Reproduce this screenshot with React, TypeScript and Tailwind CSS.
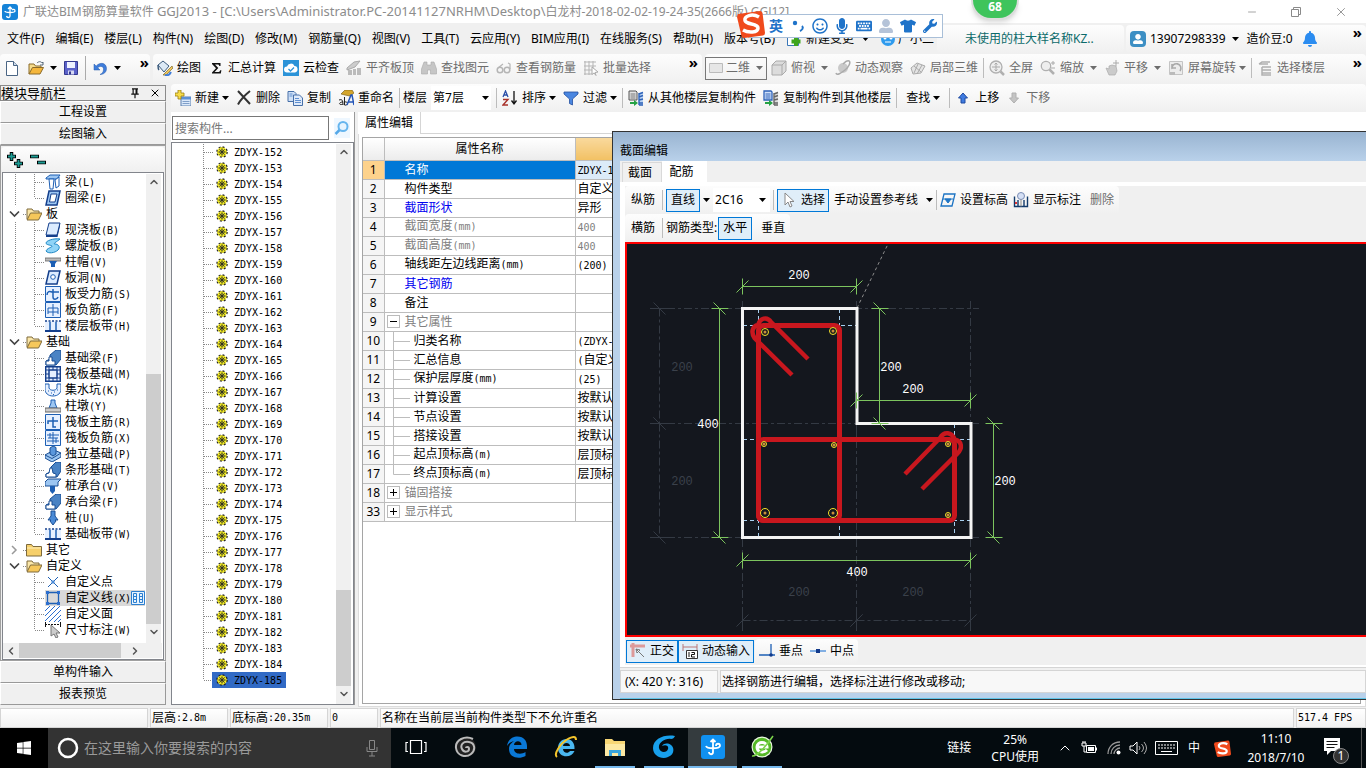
import { Fragment, type ReactNode } from "react";
import clsx from "clsx";
import { ChevronUp, ChevronDown, ChevronLeft, ChevronRight, Minus, X } from "lucide-react";
import { FaMicrophone, FaKeyboard, FaTshirt, FaWrench, FaRegSmile, FaUserAlt, FaBell, FaWindows } from "react-icons/fa";

/* ---------- 16x16 drawings ---------- */

const B = "#1d5fb4";
const L = "#9cc6f2";

const art: Record<string, ReactNode> = {
  newDoc: <><path d="M2.500 1.500h7l4 4v10h-11z" fill="#fff" stroke="#4a6584" /><path d="M9.500 1.500v4h4" fill="#cfdcec" stroke="#4a6584" /></>,
  open: <><path d="M1 14V4h5l1.500 2H13v3" fill="#f6dc8c" stroke="#8a6a2a" /><path d="M1 14l3.500-6.500h11L12 14z" fill="#f4b63c" stroke="#8a6a2a" /><path d="M9 3c2-2 4-1.500 5 0l1-1v3h-3" fill="none" stroke="#567" /></>,
  save: <><path d="M1.500 1.500h13v13h-13z" fill="#5b62c9" stroke="#34398f" /><path d="M4 2h8v6H4z" fill="#eef2ff" /><path d="M5 10.500h6v4H5z" fill="#d6d9f3" /><path d="M6 11.500h2v3H6z" fill="#34398f" /></>,
  undo: <path d="M2 4v6h6L5.800 7.800C8 5.500 12 6 11.500 10c-.2 2-1.500 3.500-3.500 4.500 4 0 6.500-2.500 6.500-6C14.500 3 8 1.500 4.200 6.100z" fill="#3f7ddb" stroke="#2a5cab" strokeWidth=".5" />,
  paint: <><path d="M1 5l5-4 6 5-5 6z" fill="#dce9f5" stroke="#3c5b7c" /><path d="M1 5c0 3 0 4 1 5" stroke="#3c5b7c" fill="none" strokeWidth="1.500" /><path d="M15 6L8 13l-2 2 3 0 7-7z" fill="#f0c75e" stroke="#7c6a2a" strokeWidth=".7" /><path d="M8 15c3 1 5-1 6-3" stroke="#3f7ddb" strokeWidth="2" fill="none" /></>,
  sigma: <path d="M4 3h8.500v3h-1.200c-.2-1.200-.8-1.600-2-1.600H7l3.300 3.700L6.600 12h3.200c1.500 0 2-.5 2.400-1.800h1.200L12.800 13.500H4v-1l4-4.200L4 4z" fill="#111" />,
  cloud: <><path d="M0 0h16v16H0z" fill="#2b93d8" /><path d="M4 12.500a3 3 0 010-6 4 4 0 017.500-.5 3.300 3.300 0 01.5 6.500z" fill="#fff" /><path d="M5.500 9l2 2 3.500-3.500" stroke="#2b93d8" fill="none" strokeWidth="1.300" /></>,
  align: <><path d="M1 8l7-6 6-1-5 6-8 3z" fill="#ccc" stroke="#aaa" /><path d="M2 10h4v5H2zM7 9h3v6H7zM11 8h4v7h-4z" fill="#bbb" /></>,
  binoc: <path d="M3 2h3v3h4V2h3l2.500 7v5h-6v-4h-3v4h-6V9z" fill="#c6c6c6" stroke="#aaa" strokeWidth=".6" />,
  glasses: <><circle cx="4" cy="10" r="2.800" fill="none" stroke="#b5b5b5" strokeWidth="1.500" /><circle cx="11" cy="10" r="2.800" fill="none" stroke="#b5b5b5" strokeWidth="1.500" /><path d="M2 8l5-4M14 9V4l-2-1" stroke="#b5b5b5" fill="none" strokeWidth="1.200" /></>,
  batch: <><path d="M1 2h12M1 6h12M1 10h8M1 14h8M2 1v14M6 1v14M10 1v8" stroke="#b5b5b5" fill="none" /><path d="M9 7l6 5-3 .5 1 3-2-2.500-2 1.500z" fill="#fff" stroke="#aaa" /></>,
  flat: <path d="M1.500 3.500h13v9h-13z" fill="#e6e6e6" stroke="#bbb" />,
  cube: <><path d="M1 5l4-4h10v10l-4 4H1z" fill="#dcdcdc" stroke="#aaa" /><path d="M1 5h10v10M11 5l4-4" fill="none" stroke="#aaa" /></>,
  orbit: <><ellipse cx="8" cy="8" rx="5" ry="5" fill="#c9c9c9" /><path d="M1 13c1 3 5 0 9-3s6-8 4-9-4 1-6 3" fill="none" stroke="#aaa" strokeWidth="1.500" /></>,
  part3d: <><path d="M1 8l6-5 8 3-4 7-8 1z" fill="#e4e4e4" stroke="#aaa" /><path d="M4 6l7 6M8 4l-4 9M12 5l-5 9" stroke="#aaa" fill="none" /></>,
  full: <><circle cx="7" cy="7" r="6" fill="#eee" stroke="#b0b0b0" strokeWidth="1.300" /><path d="M7 3v8M3 7h8M5.500 4.500L7 3l1.500 1.500M5.500 9.500L7 11l1.500-1.500" stroke="#aaa" fill="none" /><path d="M11.500 11.500L15 15" stroke="#b0b0b0" strokeWidth="2.500" /></>,
  zoom: <><circle cx="6" cy="6" r="4.700" fill="#eee" stroke="#b0b0b0" strokeWidth="1.300" /><path d="M9.500 9.500L14 14" stroke="#b0b0b0" strokeWidth="2.500" /><path d="M11 3h4M13 1v4M11 8h4" stroke="#aaa" /></>,
  pan: <><path d="M2 8l3 1V6l3-1 4 1 1 5-2 4H5z" fill="#cbcbcb" stroke="#aaa" strokeWidth=".7" /><path d="M12 0v6M9 3h6" stroke="#aaa" /></>,
  rotate: <><path d="M1.500 1.500h13v13h-13z" fill="#ececec" stroke="#c4c4c4" /><path d="M4 9a4.500 4.500 0 118 2M4 4v4h4" fill="none" stroke="#aaa" strokeWidth="1.600" /><path d="M2 12h5v3H2z" fill="#bbb" /></>,
  floors: <path d="M2 4l3-2h8M2 4h9M5 7h9M5 10h9M5 13h9M5 7v8h9" fill="none" stroke="#b0b0b0" strokeWidth="1.500" />,
  create: <><path d="M6 7h10v9H6z" fill="#dbe9fa" stroke="#5b7fae" /><path d="M6 7h10v2.500H6z" fill="#5b8fd6" /><path d="M7.500 11.500h7M7.500 13.500h7" stroke="#7f9fc9" /><path d="M3 0h3v3h3v3H6v3H3V6H0V3h3z" fill="#f7dc4a" stroke="#9a7d10" strokeWidth=".8" /></>,
  remove: <path d="M2 1l12 13M14 1C9 5 5 9 2 14.500" stroke="#333" strokeWidth="2" fill="none" />,
  copy: <><path d="M1 1.500h6l2 2v8H1z" fill="#cfe0f6" stroke="#466fa8" /><path d="M6.500 5h6l3 3v7.500h-9z" fill="#dfeafa" stroke="#466fa8" /><path d="M8 8.500h4M8 10.500h6M8 12.500h6M2.500 4h3M2.500 6h3" stroke="#5f8fd0" /></>,
  rename: <><path d="M3 4l4-4h7l2 3-4 3-5-1z" fill="#d4a62d" stroke="#6f5510" strokeWidth=".6" /><path d="M1 10c3-1 4 0 4 5M5 12c-5 0-4 4 0 2M6.500 7v8c4 1 4-4 0-3" stroke="#222" fill="none" /><path d="M9 15l4-10h1l2 10M10.500 12H15" stroke="#2456b8" fill="none" strokeWidth="1.500" /></>,
  sort: <><path d="M1 7l2.500-6L6 7M2 5h3" stroke="#2b4fa8" fill="none" strokeWidth="1.300" /><path d="M1 9.500h5L1 15h5" stroke="#a8322b" fill="none" strokeWidth="1.400" /><path d="M12 1v12M9.500 10.500L12 14l2.500-3.500" stroke="#111" fill="none" strokeWidth="1.300" /></>,
  filter: <path d="M1 2h14v2L9.500 9v6l-3-1.500V9L1 4z" fill="#4a86e0" stroke="#234fa0" strokeWidth=".8" />,
  fromFloor: <><path d="M1 1h7l1 1v8H1z" fill="#e3e3e3" stroke="#555" /><path d="M2.500 4h5M2.500 6h5M2.500 8h5" stroke="#777" /><path d="M11 3l4-1.500v13.500h-4z" fill="#b8d2f2" /><path d="M11 4l4-1.500M11 7l4-1.500M11 10l4-1M11 13h4M11 15h4M11 3v12" stroke="#2e62b8" fill="none" strokeWidth="1.400" /><path d="M2 12h4v-2l4 3-4 3v-2H2z" fill="#25a244" /></>,
  toFloor: <><path d="M1 1h7l1 1v8H1z" fill="#cfe0fa" stroke="#2e62b8" strokeWidth="1.300" /><path d="M2.500 4h5M2.500 6h5M2.500 8h5" stroke="#2e62b8" /><path d="M11 3l4-1.500v13.500h-4z" fill="#ddd" /><path d="M11 4l4-1.500M11 7l4-1.500M11 10l4-1M11 13h4M11 15h4M11 3v12" stroke="#666" fill="none" strokeWidth="1.400" /><path d="M2 12h4v-2l4 3-4 3v-2H2z" fill="#25a244" /></>,
  up: <path d="M8 3l4.500 5H10v5H6V8H3.500z" fill="#3f7be0" stroke="#1f4aa0" />,
  down: <path d="M8 13l4.500-5H10V3H6v5H3.500z" fill="#c4c4c4" stroke="#b0b0b0" />,
  cursor: <path d="M4 1v12l3-3 2 5 2-1-2-4.500h4z" fill="#fff" stroke="#888" />,
  level: <><path d="M4 2h11l-3 12H1z" fill="none" stroke="#1d74c4" strokeWidth="1.300" /><path d="M3 7h10M5 7l3 4 3-4z" fill="#1d74c4" stroke="#1d74c4" /></>,
  showDim: <><path d="M1.500 4.500v10h13v-10M5 8v6M11 8v6" fill="none" stroke="#123a6b" strokeWidth="1.400" /><circle cx="8" cy="4" r="3.500" fill="#d5e0f5" stroke="#7a8db5" /><path d="M2 10h2v2H2z" fill="#d33" /><path d="M8 7.500v7" stroke="#888" /></>,
  ortho: <><path d="M3 0v14M0 3h15" stroke="#dd9a9a" strokeWidth="3" /><path d="M6 6l8 8M6 6l1 4 3-3z" stroke="#777" fill="#fff" /></>,
  dyn: <><path d="M1 1v7M15 1v7M1 4h14" stroke="#b77" /><path d="M4.500 7.500h11v8h-11z" fill="#fff" stroke="#333" /><path d="M7 9v5M9.500 9.500h3v2h-3v2.500h3.500" stroke="#111" fill="none" /></>,
  perp: <><path d="M0 12h16M12 1v12" stroke={B} fill="none" strokeWidth="1.300" /><circle cx="12" cy="12" r="1.800" fill="#123a8b" /></>,
  mid: <><path d="M0 8h16" stroke="#5b97dc" strokeWidth="1.500" /><path d="M6 6h4v4H6z" fill="#123a8b" /></>,
  search: <><circle cx="9" cy="6.500" r="4.500" fill="#e6f4ff" stroke="#66b5ee" strokeWidth="2" /><path d="M5.500 10L1.500 14" stroke="#55a8e8" strokeWidth="2.500" /></>,
  pin: <path d="M4 2.500h8M5.500 2v7M9.500 2v7M10.500 2v7M3 9.500h10M8 10v5" stroke="#111" strokeWidth="1.600" fill="none" />,

  // navigation tree
  folderOpen: <><path d="M1 13V3h5l1.500 2H13v3" fill="#fbe7a9" stroke="#7e6a3c" /><path d="M1 14l3.500-7h11.500L12.500 14z" fill="#f6c75a" stroke="#7e6a3c" /></>,
  folder: <><path d="M.5 14V2.500h5L7 4.500h8.500V14z" fill="#f6cf6a" stroke="#7e6a3c" /><path d="M1 6h14" stroke="#fff0bd" /></>,
  beam: <><path d="M1 4l4-3h10l-3 4H1z" fill={L} stroke={B} /><path d="M4 5h5l-1 10H5zM10 6l4-3v9l-3 2z" fill="#fff" stroke={B} /></>,
  ring: <><path d="M4 1h11l-3 14H1z" fill={L} stroke="#143f8c" strokeWidth="1.500" /><path d="M6 4h6l-2 8H4.500z" fill="#fff" stroke="#143f8c" /></>,
  slab: <><path d="M4 1h11l-3 12H1z" fill="#dcecff" stroke="#143f8c" /><path d="M1 13h11l3-12v3l-2.500 11H1z" fill="#143f8c" /></>,
  spiral: <path d="M15 1C8 0 1 3 1 5s5 2 6 3-5 2-6 5c2 3 9 2 12-1s0-6-3-6 3-3 5-5z" fill="#8fd4f7" stroke="#1d86c4" />,
  cap: <><path d="M0 4h16v3H0z" fill="#bbb" stroke="#666" strokeWidth=".8" /><path d="M4 7h8l-2 3v3H6v-3z" fill={B} /></>,
  hole: <><path d="M4 1h11l-3 13H1z" fill="#dcecff" stroke="#143f8c" strokeWidth="1.500" /><circle cx="8" cy="7" r="2.300" fill="#fff" stroke={B} /></>,
  rebarS: <><path d="M.5.500h15v15H.5z" fill="#e6f0ff" stroke={B} /><path d="M2 9c0-4 3-4 5-3h7M8 3v8c0 3 4 3 5 0" fill="none" stroke={B} strokeWidth="1.500" /></>,
  rebarF: <><path d="M.5.500h15v15H.5z" fill="#e6f0ff" stroke={B} /><path d="M3 12V6h10v6M3 10h10M8 2v12" fill="none" stroke={B} /></>,
  strip: <><path d="M0 3h16v10H0z" fill="#e6f0ff" /><path d="M0 3h16" stroke="#143f8c" strokeWidth="1.500" strokeDasharray="2 1.500" /><path d="M0 13h16" stroke="#143f8c" strokeWidth="2" /><path d="M5 4v8M11 4v8" stroke={B} strokeWidth="1.500" /></>,
  fbeam: <><path d="M1 15v-4l4-2V5l6-5h5v9l-5 6z" fill="#4a83c4" stroke="#1b4f94" /><path d="M1 15v-4h3V7h3v4h3v4z" fill="#fff" stroke="#1b4f94" /></>,
  raft: <><path d="M.7.700h14.600v14.600H.7z" fill="#e6f0ff" stroke="#143f8c" strokeWidth="1.400" /><path d="M4 1v14M12 1v14M1 4h14M1 12h14M4 4h8v8H4zM8 1v3M8 12v3M1 8h3M12 8h3" fill="none" stroke="#143f8c" /></>,
  pit: <><path d="M0 2h4v4c1 3 7 3 8 0V2h4v5c0 4-3 7-8 7s-8-3-8-7z" fill="#e6f0ff" stroke={B} /><path d="M3 9h1M6 11h1M9 10h1M12 8h1M8 12.500h1" stroke={B} /></>,
  pier: <><path d="M4 10l2-5V2h4v3l2 5z" fill={L} stroke={B} /><path d="M0 10h16v4H0z" fill="#ccc" stroke="#666" /></>,
  rebarR: <><path d="M.5.500h15v15H.5z" fill="#e6f0ff" stroke={B} /><path d="M3 10V7h10M8 3v10h3" fill="none" stroke={B} strokeWidth="1.500" /></>,
  rebarX: <><path d="M.5.500h15v15H.5z" fill="#e6f0ff" stroke={B} /><path d="M2 5h12M2 11h12M5 3v5M11 8v5M3 8h10M8 2v12" fill="none" stroke={B} /></>,
  pad: <><path d="M0 9l9-5 7 3v4l-9 5-7-4z" fill={L} stroke="#1b4f94" /><path d="M5 2l3-2 3 1.500V8L8 10 5 8z" fill="#5b97dc" stroke="#1b4f94" /><path d="M0 9l7 3.500L16 7" fill="none" stroke="#1b4f94" /></>,
  stripF: <><path d="M1 15v-3l4-2 1-5 5-5h5v9l-4 6z" fill="#4a83c4" stroke="#1b4f94" /><path d="M1 15v-3l3-1 1-5h2l1 5 3 1v3z" fill="#fff" stroke="#1b4f94" /></>,
  pileCap: <><path d="M0 4l3-3h13l-3 3v4H0z" fill={L} stroke="#1b4f94" /><path d="M5 8h5v5l-2.500 3L5 13z" fill={B} /></>,
  pile: <path d="M6 1h4v5l3 4h-3l1 1-3 4-3-4 1-1H3l3-4z" fill="#4a8ad6" stroke="#1b4f94" />,
  point: <><path d="M3 3l10 10M13 3L3 13" stroke={B} /><path d="M6.500 6.500h3v3h-3z" fill="#4a8ad6" /></>,
  poly: <><path d="M2.500 2.500h11v11h-11z" fill="none" stroke={B} strokeWidth="1.300" /><path d="M1 1h3v3H1zM12 1h3v3h-3zM1 12h3v3H1zM12 12h3v3h-3z" fill="#2c6fd0" /></>,
  hatch: <path d="M0 5l5-5M0 10L10 0M0 15L15 0M4 16L16 4M9 16l7-7M13 16l3-3" stroke="#2c6fd0" />,
  dim: <><path d="M.5 0v5M15.500 0v5M0 2.500h16" stroke="#111" strokeDasharray="2 1" /><path d="M6 3v11l3-2 2 4 2-1-2-4h4z" fill="#ccc" stroke="#777" /></>,
  gear: <><circle cx="6" cy="8" r="4.500" fill="#f6ee20" stroke="#f6ee20" /><circle cx="6" cy="8" r="5.200" fill="none" stroke="#222" strokeWidth="1.200" strokeDasharray="2 2.080" /><path d="M6 3.500v9M1.500 8h9M3 5l6 6M9 5l-6 6" stroke="#333" strokeWidth=".6" /><circle cx="6" cy="8" r="2.200" fill="none" stroke="#222" strokeWidth=".7" /><circle cx="6" cy="8" r="1" fill="#222" /></>,
};

function Icon({ name, className = "w-4 h-4" }: { name: string; className?: string }) {
  return <svg viewBox="0 0 16 16" className={clsx("shrink-0", className)} aria-hidden="true">{art[name]}</svg>;
}

function Arrow({ className }: { className?: string }) {
  return (
    <svg viewBox="0 0 7 4" className={clsx("w-[7px] h-1 shrink-0", className)} aria-hidden="true">
      <path d="M0 0h7L3.500 4z" fill="currentColor" />
    </svg>
  );
}

/* Narrow fixed-width glyphs next to 12px Han characters */
function Mixed({ text }: { text: string }) {
  return (
    <>
      {text.split(/([\x20-\x7e]+)/).map((part, i) =>
        i % 2 ? <span key={i} className="font-['DejaVu_Sans_Mono',monospace] text-[10px]">{part}</span> : <Fragment key={i}>{part}</Fragment>
      )}
    </>
  );
}

const Sep = () => <span className="-mx-0.5 h-5 w-px shrink-0 bg-[#bcbcbc]" />;
const More = () => <button aria-label="more" className="pb-3 text-[15px] leading-none font-bold">»</button>;

type ToolProps = { icon?: string; label: string; off?: boolean; arrow?: "near" | "far"; on?: boolean };

function Tool({ icon, label, off, arrow, on }: ToolProps) {
  return (
    <button
      disabled={off}
      className={clsx(
        "flex h-[23px] shrink-0 items-center gap-1 whitespace-nowrap",
        off && "text-[#6d6d6d]",
        on && "border border-[#0078d7] bg-[#e0eef9]",
        on && (icon ? "px-[3px]" : "px-1"),
        !icon && !on && "px-1"
      )}
    >
      {icon && <Icon name={icon} />}
      {label}
      {arrow && <Arrow className={arrow === "far" ? "ml-0.5" : "-ml-px"} />}
    </button>
  );
}

const bar = "flex items-center rounded-sm bg-linear-to-b from-[#fdfdfd] to-[#f0f0f0]";

function TitleBar() {
  return (
    <header className="flex h-[23px] shrink-0 items-center bg-white pl-0.5">
      <svg viewBox="0 0 16 16" className="h-4 w-4">
        <rect width="16" height="16" rx="3" fill="#1583d8" />
        <path d="M8 3v9c0 2-3 2-3.500 0M3 7c0 2 10 2 10 0s-2-2-3-1M6 5l2-2 2 2" fill="none" stroke="#fff" strokeWidth="1.300" />
      </svg>
      <h1 className="ml-[5px] flex-1 truncate text-xs text-[#8c8c8c]">
        广联达BIM钢筋算量软件 <span className="text-[13px]">GGJ2013 - [C:\Users\Administrator.PC-20141127NRHM\Desktop\</span>白龙村-2018-02-02-19-24-35(2666版).GGJ12]
      </h1>
      <div className="flex w-[120px] items-center justify-between pr-[18px] text-[#8a8a8a]">
        <button aria-label="minimize"><Minus className="h-3 w-3" strokeWidth={1.500} /></button>
        <button aria-label="restore">
          <svg viewBox="0 0 10 10" className="h-[10px] w-[10px]"><path d="M.5 2.500h7v7h-7zM2.500 2.500v-2h7v7h-2" fill="none" stroke="currentColor" /></svg>
        </button>
        <button aria-label="close"><X className="h-[14px] w-[14px]" strokeWidth={1.500} /></button>
      </div>
    </header>
  );
}

const menus = ["文件(F)", "编辑(E)", "楼层(L)", "构件(N)", "绘图(D)", "修改(M)", "钢筋量(Q)", "视图(V)", "工具(T)", "云应用(Y)", "BIM应用(I)", "在线服务(S)", "帮助(H)", "版本号(B)"];

function MenuBar() {
  return (
    <div className="flex h-[31px] shrink-0 items-center">
      <nav className="flex w-[937px] shrink-0 items-center gap-[11px] overflow-hidden pl-[7px] whitespace-nowrap">
        {menus.map((m) => <button key={m}>{m}</button>)}
        <button className="flex items-center gap-1">
          <svg viewBox="0 0 16 16" className="h-4 w-4"><path d="M1.500 1.500h9l2 2v11h-11z" fill="#fff" stroke="#3a77b8" /><path d="M10 6v9M5.500 10.500h9" stroke="#3fa51c" strokeWidth="4" /></svg>
          新建变更
          <Arrow className="ml-1" />
        </button>
        <button className="flex items-center gap-0.5">
          <svg viewBox="0 0 16 16" className="h-4 w-4"><circle cx="8" cy="8" r="7" fill="#2f9bee" /><circle cx="5" cy="7" r="1.500" fill="#fff" /><circle cx="11" cy="7" r="1.500" fill="#fff" /><path d="M5 11h6" stroke="#fff" /></svg>
          广小二
        </button>
      </nav>
      <div className={clsx(bar, "h-7 flex-1 overflow-hidden pl-7")}>
        <a href="#notice" className="whitespace-nowrap text-[#0b6a6a]">未使用的柱大样名称KZ..</a>
      </div>
      <div className={clsx(bar, "ml-0.5 h-7 w-[240px] shrink-0 pr-1 pl-1")}>
        <span className="mr-1 flex h-4 w-4 items-center justify-center rounded-sm bg-[#3d8fc4] text-white"><FaUserAlt className="h-2.5 w-2.5" /></span>
        13907298339
        <Arrow className="mr-2 ml-1.5" />
        造价豆:0
        <FaBell className="ml-2.5 h-4 w-[14px] text-[#2b8cf0]" />
        <span className="flex-1" />
        <More />
      </div>
    </div>
  );
}

function MainToolbar() {
  return (
    <div className="flex h-[30px] shrink-0 gap-[3px]">
      <div className={clsx(bar, "w-[150px] shrink-0 pr-px pb-0.5 pl-1")}>
        <button aria-label="new"><Icon name="newDoc" /></button>
        <button aria-label="open" className="ml-2 flex items-center gap-1.5"><Icon name="open" /><Arrow /></button>
        <button aria-label="save" className="mr-1.5 ml-1.5"><Icon name="save" /></button>
        <span className="h-6 w-px bg-[#aaa]" />
        <button aria-label="undo" className="ml-1.5 flex items-center gap-1.5"><Icon name="undo" /><Arrow /></button>
        <span className="flex-1" />
        <More />
      </div>
      <div className={clsx(bar, "w-[549px] shrink-0 gap-[7px] pr-1 pb-0.5 pl-1")}>
        <Tool icon="paint" label="绘图" />
        <Tool icon="sigma" label="汇总计算" />
        <Tool icon="cloud" label="云检查" />
        <Tool icon="align" label="平齐板顶" off />
        <Tool icon="binoc" label="查找图元" off />
        <Tool icon="glasses" label="查看钢筋量" off />
        <Tool icon="batch" label="批量选择" off />
        <span className="flex-1" />
        <More />
      </div>
      <div className={clsx(bar, "flex-1 gap-[7px] overflow-hidden pr-1 pb-0.5")}>
        <label className="relative -mr-[3px] flex h-[23px] w-[62px] shrink-0 items-center border border-[#777] pl-0.5 text-[#6d6d6d]">
          <Icon name="flat" />
          <select aria-label="view mode" className="flex-1 appearance-none pl-0.5 outline-none"><option>二维</option></select>
          <Arrow className="absolute right-[3px]" />
        </label>
        <Tool icon="cube" label="俯视" off arrow="far" />
        <Tool icon="orbit" label="动态观察" off />
        <Tool icon="part3d" label="局部三维" off />
        <Sep />
        <Tool icon="full" label="全屏" off />
        <Tool icon="zoom" label="缩放" off arrow="far" />
        <Tool icon="pan" label="平移" off arrow="far" />
        <Tool icon="rotate" label="屏幕旋转" off arrow="near" />
        <Sep />
        <Tool icon="floors" label="选择楼层" off />
        <span className="flex-1" />
        <More />
      </div>
    </div>
  );
}

type Node = { label: string; icon: string; root?: boolean; last?: boolean; closed?: boolean; tail?: boolean; active?: boolean };

const tree: Node[] = [
  { label: "梁(L)", icon: "beam" },
  { label: "圈梁(E)", icon: "ring", last: true },
  { label: "板", icon: "folderOpen", root: true },
  { label: "现浇板(B)", icon: "slab" },
  { label: "螺旋板(B)", icon: "spiral" },
  { label: "柱帽(V)", icon: "cap" },
  { label: "板洞(N)", icon: "hole" },
  { label: "板受力筋(S)", icon: "rebarS" },
  { label: "板负筋(F)", icon: "rebarF" },
  { label: "楼层板带(H)", icon: "strip", last: true },
  { label: "基础", icon: "folderOpen", root: true },
  { label: "基础梁(F)", icon: "fbeam" },
  { label: "筏板基础(M)", icon: "raft" },
  { label: "集水坑(K)", icon: "pit" },
  { label: "柱墩(Y)", icon: "pier" },
  { label: "筏板主筋(R)", icon: "rebarR" },
  { label: "筏板负筋(X)", icon: "rebarX" },
  { label: "独立基础(P)", icon: "pad" },
  { label: "条形基础(T)", icon: "stripF" },
  { label: "桩承台(V)", icon: "pileCap" },
  { label: "承台梁(F)", icon: "fbeam" },
  { label: "桩(U)", icon: "pile" },
  { label: "基础板带(W)", icon: "strip", last: true },
  { label: "其它", icon: "folder", root: true, closed: true },
  { label: "自定义", icon: "folderOpen", root: true },
  { label: "自定义点", icon: "point", tail: true },
  { label: "自定义线(X)", icon: "poly", tail: true, active: true },
  { label: "自定义面", icon: "hatch", tail: true },
  { label: "尺寸标注(W)", icon: "dim", tail: true, last: true },
];

function TreeRow({ node }: { node: Node }) {
  if (node.root) {
    return (
      <li className="flex h-4 items-center">
        <svg viewBox="0 0 23 16" className="h-4 w-[23px] shrink-0">
          {node.closed ? <path d="M9 4l4 4-4 4" fill="none" stroke="#999" strokeWidth="1.500" /> : <path d="M7 5.500l4.500 4.500L16 5.500" fill="none" stroke="#444" strokeWidth="1.700" />}
          <path d="M20 8.500h3" stroke="#888" strokeDasharray="1 1" />
        </svg>
        <Icon name={node.icon} />
        <span className="ml-1 whitespace-nowrap">{node.label}</span>
      </li>
    );
  }
  return (
    <li className="flex h-4 items-center">
      <svg viewBox="0 0 42 16" className="h-4 w-[42px] shrink-0">
        {!node.tail && <path d="M12.500 0v16" stroke="#888" strokeDasharray="1 1" />}
        <path d={node.last ? "M31.500 0v8" : "M31.500 0v16"} stroke="#888" strokeDasharray="1 1" />
        <path d="M32 8.500h10" stroke="#888" strokeDasharray="1 1" />
      </svg>
      <span className={clsx("flex h-4 items-center", node.active && "bg-[#d9d9d9]")}>
        <Icon name={node.icon} />
        <span className="ml-1 whitespace-nowrap"><Mixed text={node.label} /></span>
        {node.active && (
          <svg viewBox="0 0 14 16" className="h-4 w-[14px]"><path d="M.5 1.500h13v13H.5z" fill="#e6f3ff" stroke="#2c7fd0" /><path d="M2.500 3.500h3v9h-3zM8.500 3.500h3v9h-3zM3 6.500h2M3 9.500h2M9 6.500h2M9 9.500h2" fill="none" stroke="#2c7fd0" /></svg>
        )}
      </span>
    </li>
  );
}

const navButton = "h-[22px] w-full border border-t-white border-l-white border-r-[#999] border-b-[#999] bg-[#f0f0f0] text-center leading-none";

function ModuleNav() {
  return (
    <aside className="mb-0.5 flex w-[166px] shrink-0 flex-col">
      <div className="mt-px flex h-4 items-center border border-[#8a8a8a] pr-1">
        <h2 className="flex-1 text-[13px] leading-none">模块导航栏</h2>
        <button aria-label="pin" className="mr-2"><Icon name="pin" className="h-3 w-3" /></button>
        <button aria-label="close panel"><X className="h-3 w-3" strokeWidth={2} /></button>
      </div>
      <button className={navButton}>工程设置</button>
      <button className={navButton}>绘图输入</button>
      <div className="flex min-h-0 flex-1 flex-col border border-[#a0a0a0] bg-[#f0f0f0] pt-px">
        <div className={clsx(bar, "h-[25px] shrink-0 gap-1.5 pl-1.5")}>
          <button aria-label="expand all">
            <svg viewBox="0 0 16 16" className="h-4 w-4"><path d="M4.500 0v9M0 4.500h9M11.500 7v9M7 11.500h9" stroke="#000" strokeWidth="3.500" /><path d="M4.500 1v7M1 4.500h7M11.500 8v7M8 11.500h7" stroke="#1c9c94" strokeWidth="1.800" /></svg>
          </button>
          <button aria-label="collapse all">
            <svg viewBox="0 0 18 16" className="h-4 w-[18px]"><path d="M1 4.500h9M8 10.500h9" stroke="#000" strokeWidth="3.500" /><path d="M2 4.500h7M9 10.500h7" stroke="#1c9c94" strokeWidth="1.800" /></svg>
          </button>
        </div>
        <div className="mx-px flex min-h-0 flex-1 flex-col border border-[#82858c] bg-white pb-px">
          <div className="flex min-h-0 flex-1 pt-px">
            <ul className="flex-1 overflow-hidden">
              {tree.map((n) => <TreeRow key={n.label} node={n} />)}
            </ul>
            <div className="mr-0.5 flex w-[15px] shrink-0 flex-col items-center bg-[#f0f0f0] pb-[3px]">
              <ChevronUp className="mt-0.5 h-3 w-3 text-[#555]" strokeWidth={3} />
              <div className="mt-auto h-[250px] w-full bg-[#cdcdcd]" />
              <ChevronDown className="my-0.5 h-3 w-3 text-[#555]" strokeWidth={3} />
            </div>
          </div>
          <div className="mr-px flex h-[15px] shrink-0 items-center bg-[#f0f0f0]">
            <ChevronLeft className="mx-0.5 h-3 w-3 text-[#555]" strokeWidth={3} />
            <div className="h-full w-[102px] bg-[#cdcdcd]" />
            <ChevronRight className="ml-2 h-3 w-3 text-[#555]" strokeWidth={3} />
          </div>
        </div>
      </div>
      <button className={navButton}>单构件输入</button>
      <button className={navButton}>报表预览</button>
    </aside>
  );
}

function ComponentToolbar() {
  return (
    <div className={clsx(bar, "h-7 shrink-0 gap-[7px] overflow-hidden pl-1")}>
      <Tool icon="create" label="新建" arrow="near" />
      <Tool icon="remove" label="删除" />
      <Tool icon="copy" label="复制" />
      <Tool icon="rename" label="重命名" />
      <Sep />
      <label className="-ml-0.5 flex shrink-0 items-center gap-1">
        楼层
        <span className="relative flex h-6 w-[60px] items-center bg-white">
          <select className="w-full appearance-none pl-0.5 outline-none"><option>第7层</option></select>
          <Arrow className="absolute right-0.5" />
        </span>
      </label>
      <Sep />
      <Tool icon="sort" label="排序" arrow="near" />
      <Tool icon="filter" label="过滤" arrow="near" />
      <Sep />
      <Tool icon="fromFloor" label="从其他楼层复制构件" />
      <Tool icon="toFloor" label="复制构件到其他楼层" />
      <Sep />
      <Tool label="查找" arrow="near" />
      <Sep />
      <Tool icon="up" label="上移" />
      <Tool icon="down" label="下移" off />
    </div>
  );
}

const components = Array.from({ length: 34 }, (_, i) => 152 + i);

function ComponentList() {
  return (
    <section className="mb-0.5 flex w-[184px] shrink-0 flex-col border-r border-[#999] bg-white">
      <div className="flex h-[30px] shrink-0 items-center pt-0.5">
        <input aria-label="搜索构件" placeholder="搜索构件..." className="ml-px h-6 w-[157px] border border-[#777] pl-0.5 outline-none placeholder:text-[#777]" />
        <button aria-label="search" className="ml-[5px] flex h-5 w-4 items-center bg-[#eef7ff]"><Icon name="search" /></button>
      </div>
      <div className="flex min-h-0 flex-1 border border-[#82858c] pt-px">
        <ul className="flex-1 overflow-hidden">
          {components.map((n) => (
            <li key={n} className="flex h-4 items-center">
              <svg viewBox="0 0 42 16" className="h-4 w-[42px] shrink-0">
                <path d={n === 185 ? "M31.500 0v8" : "M31.500 0v16"} stroke="#888" strokeDasharray="1 1" />
                <path d="M32 8.500h9" stroke="#888" strokeDasharray="1 1" />
              </svg>
              <span className={clsx("-ml-0.5 flex h-4 items-center pr-1 pl-1", n === 185 && "bg-[#316ac5]")}>
                <Icon name="gear" />
                <span className="ml-0.5"><Mixed text={`ZDYX-${n}`} /></span>
              </span>
            </li>
          ))}
        </ul>
        <div className="mr-0.5 flex w-[15px] flex-col items-center bg-[#f0f0f0] pb-0.5">
          <ChevronUp className="mt-0.5 h-3 w-3 text-[#555]" strokeWidth={3} />
          <div className="mt-auto h-24 w-full bg-[#cdcdcd]" />
          <ChevronDown className="my-0.5 h-3 w-3 text-[#555]" strokeWidth={3} />
        </div>
      </div>
    </section>
  );
}

type Prop = { no: number; name: string; value?: string; tone?: "blue" | "gray"; group?: "+" | "-"; child?: boolean; end?: boolean };

const props: Prop[] = [
  { no: 1, name: "名称", value: "ZDYX-185" },
  { no: 2, name: "构件类型", value: "自定义线" },
  { no: 3, name: "截面形状", value: "异形", tone: "blue" },
  { no: 4, name: "截面宽度(mm)", value: "400", tone: "gray" },
  { no: 5, name: "截面高度(mm)", value: "400", tone: "gray" },
  { no: 6, name: "轴线距左边线距离(mm)", value: "(200)" },
  { no: 7, name: "其它钢筋", tone: "blue" },
  { no: 8, name: "备注" },
  { no: 9, name: "其它属性", group: "-", tone: "gray" },
  { no: 10, name: "归类名称", value: "(ZDYX-185)", child: true },
  { no: 11, name: "汇总信息", value: "(自定义线)", child: true },
  { no: 12, name: "保护层厚度(mm)", value: "(25)", child: true },
  { no: 13, name: "计算设置", value: "按默认计算设置计算", child: true },
  { no: 14, name: "节点设置", value: "按默认节点设置计算", child: true },
  { no: 15, name: "搭接设置", value: "按默认搭接设置计算", child: true },
  { no: 16, name: "起点顶标高(m)", value: "层顶标高", child: true },
  { no: 17, name: "终点顶标高(m)", value: "层顶标高", child: true, end: true },
  { no: 18, name: "锚固搭接", group: "+", tone: "gray" },
  { no: 33, name: "显示样式", group: "+", tone: "gray" },
];

function PropertyPanel() {
  return (
    <section className="flex min-w-0 flex-1 flex-col">
      <div role="tablist" className="flex h-[22px] shrink-0 bg-white">
        <button role="tab" aria-selected="true" className="border-r border-[#d5d5d5] px-[7px]">属性编辑</button>
        <span className="flex-1 border-b border-[#d5d5d5]" />
      </div>
      <div className="flex min-h-0 flex-1 border border-t-0 border-[#dcdcdc] bg-white pt-[3px] pr-1 pb-0.5 pl-[3px]">
        <div className="flex-1 overflow-hidden border border-[#a5a5a5]">
          <table className="w-full table-fixed border-collapse">
            <colgroup><col className="w-[21px]" /><col className="w-[191px]" /><col /></colgroup>
            <thead>
              <tr className="h-[22px] bg-linear-to-b from-white to-[#ececec]">
                <th className="border-r border-b border-[#bdbdbd]" />
                <th className="border-r border-b border-[#bdbdbd] p-0 font-normal">属性名称</th>
                <th className="border-b border-[#bdbdbd] bg-linear-to-b from-[#f9d99c] to-[#f2c163] p-0 font-normal">属性值</th>
              </tr>
            </thead>
            <tbody>
              {props.map((p, i) => (
                <tr key={p.no} className={clsx(p.tone === "gray" && "text-[#808080]")}>
                  <td className={clsx("border-r border-b border-[#bdbdbd] p-0 text-center text-black", i ? "bg-[#f5f5f5]" : "bg-[#fdd28c]")}>
                    <div className="h-[18px] overflow-hidden leading-[18px]">{p.no}</div>
                  </td>
                  <td className={clsx("border-r border-b border-[#bdbdbd] p-0 whitespace-nowrap", !i && "bg-[#0078d7] text-white", p.tone === "blue" && "text-[#0000f0]")}>
                    <div className="flex h-[18px] items-center leading-[18px]">
                      {p.child && (
                        <svg viewBox="0 0 29 20" className="-my-px h-5 w-[29px] shrink-0"><path d={p.end ? "M8.500 0V10.500H25" : "M8.500 0V20M8.500 10.500H25"} fill="none" stroke="#bdbdbd" /></svg>
                      )}
                      {p.group && (
                        <button aria-label={p.name} className="mr-[5px] ml-0.5 flex h-[13px] w-[13px] items-center justify-center border border-[#bbb] text-black">
                          <svg viewBox="0 0 9 9" className="h-[9px] w-[9px]"><path d={p.group === "+" ? "M1 4.500h7M4.500 1v7" : "M1 4.500h7"} stroke="#000" /></svg>
                        </button>
                      )}
                      <span className={clsx(!p.child && !p.group && "pl-5")}><Mixed text={p.name} /></span>
                    </div>
                  </td>
                  <td className={clsx("border-b border-[#bdbdbd] p-0", !i && "bg-[#dcebf9]")}>
                    <div className="h-[18px] overflow-hidden pl-0.5 leading-[18px] whitespace-nowrap"><Mixed text={p.value ?? ""} /></div>
                  </td>
                </tr>
              ))}
            </tbody>
          </table>
        </div>
      </div>
    </section>
  );
}

/* ---------- section drawing ---------- */

function Dim({ x1, y1, x2, y2, faint }: { x1: number; y1: number; x2: number; y2: number; faint?: boolean }) {
  const flat = y1 === y2;
  const ends = [[x1, y1], [x2, y2]];
  return (
    <g stroke={faint ? "#343a44" : "#7cc45e"} fill="none">
      <path d={`M${x1} ${y1}L${x2} ${y2}`} strokeDasharray={faint ? "8 3 3 3" : undefined} />
      {ends.map(([x, y]) => (
        <path key={`${x}-${y}`} d={flat ? `M${x} ${y - 8}v16M${x - 6} ${y + 6}l12-12` : `M${x - 8} ${y}h17M${x - 6} ${y - 6}l12 12`} />
      ))}
    </g>
  );
}

const bars = [[765, 332, 3.5], [833, 331, 3.5], [764, 444, 2.5], [834, 445, 2.5], [948, 444, 2.5], [765, 513, 4.5], [833, 513, 4.5], [948, 515, 2.5]];
const faintLabels = [[682, 371], [682, 485], [799, 596], [913, 596]];
const labels: [number, number, string][] = [[799, 279, "200"], [708, 428, "400"], [891, 371, "200"], [913, 393, "200"], [1005, 485, "200"], [857, 576, "400"]];

function SectionDrawing() {
  return (
    <svg className="h-full w-full bg-[#14171e] font-['Liberation_Mono',monospace] text-xs">
      <g transform="translate(-627 -244)">
        <g stroke="#343a44" strokeDasharray="8 3 3 3">
          <path d="M650 308.500H979M650 423.500H979M650 537.500H979M742.500 301V631M856.500 301V631M970.500 301V631" />
        </g>
        <Dim x1={659.5} y1={308.5} x2={659.5} y2={423.5} faint />
        <Dim x1={659.5} y1={423.5} x2={659.5} y2={537.5} faint />
        <Dim x1={742.5} y1={620.5} x2={856.5} y2={620.5} faint />
        <Dim x1={856.5} y1={620.5} x2={970.5} y2={620.5} faint />
        <path d="M857 308L888 244" stroke="#8c8c8c" strokeDasharray="3 3" />
        <path d="M743 325.500H856M743 439.500H970M743 520.500H970M758.500 309V537M839.500 309V537M954.500 424V537" stroke="#a8d0f0" strokeDasharray="4 3" />
        <path d="M758.500 327h81v193h-81z" fill="#14171e" />
        <path d="M758.500 439h196v81h-196z" fill="#14171e" />
        <path d="M760 423.500H838M856.500 423v97" stroke="#343a44" strokeDasharray="8 3 3 3" />
        <path d="M742.500 308.500H857V423.500H971V537.500H742.500z" fill="none" stroke="#f4f4f4" strokeWidth="3" />
        <g fill="none" stroke="#c8171e" strokeWidth="5">
          <rect x="758.500" y="325.500" width="81" height="195" rx="5" />
          <rect x="758.500" y="439.500" width="196" height="81" rx="5" />
          <path d="M792 375L754.500 338C751 333 752 326 758 325C760 318 767 316 771 322L808 359" strokeWidth="4.500" />
          <path d="M905 474L940 438C944 431 952 432 954.500 439.500C962 441 963 448 957 454L922 489" strokeWidth="4.500" />
        </g>
        <Dim x1={742.5} y1={286.5} x2={856.5} y2={286.5} />
        <Dim x1={719.5} y1={308.5} x2={719.5} y2={537.5} />
        <Dim x1={879.5} y1={308.5} x2={879.5} y2={423.5} />
        <Dim x1={856.5} y1={400.5} x2={970.5} y2={400.5} />
        <Dim x1={993.5} y1={423.5} x2={993.5} y2={537.5} />
        <Dim x1={742.5} y1={560.5} x2={970.5} y2={560.5} />
        {bars.map(([x, y, r]) => (
          <g key={`${x}-${y}`}>
            <circle cx={x} cy={y} r={r} fill="#14171e" stroke="#f3e02a" />
            <circle cx={x} cy={y} r="1.500" fill="#c98f3a" />
          </g>
        ))}
        <g textAnchor="middle">
          {faintLabels.map(([x, y]) => <text key={`${x}-${y}`} x={x} y={y} fill="#3b414b">200</text>)}
          {labels.map(([x, y, t]) => <text key={`${x}-${y}`} x={x} y={y} fill="#fff">{t}</text>)}
        </g>
      </g>
    </svg>
  );
}

function SectionDialog() {
  return (
    <div role="dialog" aria-label="截面编辑" className="absolute top-[131px] right-0 bottom-[68px] left-[612px] flex flex-col border border-r-0 border-[#333] bg-[#b9d1ea] pl-[7px]">
      <h2 className="-ml-[7px] flex h-[29px] shrink-0 items-end bg-linear-to-b from-[#99b4d1] to-[#b9d1ea] pb-0.5 pl-[7px]">截面编辑</h2>
      <div className="flex min-h-0 flex-1 flex-col bg-[#f0f0f0]">
        <div role="tablist" className="flex h-[21px] shrink-0 items-end">
          <button role="tab" className="ml-0.5 h-5 w-10 border border-b-0 border-[#d9d9d9] pr-1 leading-none">截面</button>
          <button role="tab" aria-selected="true" className="h-[21px] w-[45px] bg-white pr-1.5 leading-none">配筋</button>
        </div>
        <div className="flex min-h-0 flex-1 flex-col border-b border-[#d5d5d5] bg-white pt-1 pb-0.5 pl-[5px]">
          <div className="flex h-[56px] shrink-0 flex-col items-start bg-[#f0f0f0]">
            <div className={clsx(bar, "h-7 gap-[5px] pr-px pl-0.5")}>
              <Tool label="纵筋" />
              <Sep />
              <Tool label="直线" on />
              <Arrow className="-mx-0.5" />
              <span className="relative flex h-6 w-[57px] items-center bg-white">
                <select aria-label="rebar" className="w-full appearance-none pl-0.5 outline-none"><option>2C16</option></select>
                <Arrow className="absolute right-1" />
              </span>
              <Sep />
              <Tool icon="cursor" label="选择" on />
              <button className="flex items-center gap-2">手动设置参考线<Arrow /></button>
              <Sep />
              <Tool icon="level" label="设置标高" />
              <Tool icon="showDim" label="显示标注" />
              <Tool label="删除" off />
            </div>
            <div className={clsx(bar, "h-7 gap-[5px] pr-px pl-0.5")}>
              <Tool label="横筋" />
              <Sep />
              <span className="-mr-1">钢筋类型:</span>
              <Tool label="水平" on />
              <Tool label="垂直" />
            </div>
          </div>
          <div className="min-h-0 flex-1 border-2 border-r-0 border-[#ff0000]">
            <SectionDrawing />
          </div>
          <div className="flex h-7 shrink-0 items-center bg-[#f0f0f0] pl-px">
            <Tool icon="ortho" label="正交" on />
            <Tool icon="dyn" label="动态输入" on />
            <div className={clsx(bar, "ml-px h-6 gap-[7px] px-1")}>
              <Tool icon="perp" label="垂点" />
              <Tool icon="mid" label="中点" />
            </div>
          </div>
        </div>
        <div className="mt-0.5 flex h-[23px] shrink-0 gap-0.5">
          <span className="flex w-[98px] items-center border border-[#d5d5d5] bg-[#f8f8f8] pl-1">(X: 420 Y: 316)</span>
          <span className="flex flex-1 items-center border border-[#d5d5d5] bg-[#f8f8f8] pl-px">选择钢筋进行编辑，选择标注进行修改或移动;</span>
        </div>
      </div>
      <div className="h-[6px] shrink-0 border-b border-[#5fc4e8]" />
    </div>
  );
}

function StatusBar() {
  const cell = "flex items-center border border-[#d5d5d5] bg-linear-to-b from-white to-[#f2f2f2] pl-px whitespace-nowrap";
  return (
    <footer className="flex h-[21px] shrink-0 gap-0.5 bg-[#f0f0f0] pt-px">
      <span className={clsx(cell, "w-[148px]")} />
      <span className={clsx(cell, "w-[78px]")}><Mixed text="层高:2.8m" /></span>
      <span className={clsx(cell, "w-[98px]")}><Mixed text="底标高:20.35m" /></span>
      <span className={clsx(cell, "w-12")}><Mixed text="0" /></span>
      <span className={clsx(cell, "flex-1")}>名称在当前层当前构件类型下不允许重名</span>
      <span className={clsx(cell, "w-[70px]")}><Mixed text="517.4 FPS" /></span>
    </footer>
  );
}

function TaskIcon({ label, children, state }: { label: string; children: ReactNode; state?: "open" | "active" }) {
  return (
    <button aria-label={label} className={clsx("flex w-[49px] shrink-0 flex-col items-center", state === "active" && "bg-[#343b3e]")}>
      <svg viewBox="0 0 24 24" className="my-auto h-6 w-6">{children}</svg>
      <span className={clsx("h-0.5", state === "active" ? "w-full bg-[#76b9ed]" : "w-10", state === "open" && "bg-[#76b9ed]")} />
    </button>
  );
}

function Taskbar() {
  return (
    <div className="flex h-10 shrink-0 bg-[#040b0f] text-white">
      <button aria-label="start" className="flex w-12 items-center justify-center bg-black"><FaWindows className="h-4 w-4" /></button>
      <label className="flex w-[343px] shrink-0 items-center bg-[#333] pl-[9px]">
        <svg viewBox="0 0 22 22" className="h-[22px] w-[22px]"><circle cx="11" cy="11" r="9" fill="none" stroke="#fff" strokeWidth="2.500" /></svg>
        <input placeholder="在这里输入你要搜索的内容" className="ml-[5px] w-0 flex-1 bg-transparent text-sm outline-none placeholder:text-[#9a9a9a]" />
        <svg viewBox="0 0 12 18" className="mr-[13px] h-[18px] w-3"><path d="M3.500 1.500h5v9h-5zM1 8v4.500h10V8M6 13v4M3 17h6" fill="none" stroke="#888" /></svg>
      </label>
      <TaskIcon label="task view"><path d="M6.500 5.500h11v13h-11zM4 7.500H2v9h2M20 7.500h2v9h-2" fill="none" stroke="#fff" strokeWidth="1.200" /></TaskIcon>
      <TaskIcon label="browser">
        <circle cx="13" cy="12" r="10" fill="#222" />
        <path d="M20 4C12 0 2 5 3 13s10 10 15 6 4-11-2-12-9 3-7 7 7 3 7 0-3-2-3-1" fill="none" stroke="#bbb" strokeWidth="2" />
      </TaskIcon>
      <div className="flex pl-[3px]">
        <TaskIcon label="edge">
          <path d="M2 11C3 4 8 1.500 12.500 1.500 19 1.500 22 6 22 11v3H9c0 5 7 6 11.500 3v4C14 24.500 4 23 4 14c0-4 2.500-6.500 5.500-8C6 6.500 3.500 8.500 2 11zM9 10h7.500c0-5-7-5-7.500 0z" fill="#0a78d6" />
        </TaskIcon>
        <TaskIcon label="internet explorer">
          <path d="M4 13C4 8 7.500 4 12.500 4S21 8 20.500 14H9c0 4 5 5 7 2h4.500c-3 8-16.500 7-16.500-3zm5-2h7c0-4-7-4-7 0z" fill="#4ab7f0" />
          <path d="M3 22C-1 19 7 8 13 4.500S22 1 22 5" fill="none" stroke="#f5c52c" strokeWidth="2" />
        </TaskIcon>
        <TaskIcon label="file explorer" state="open">
          <path d="M2 4h7l2 2h11v15H2z" fill="#f8d775" /><path d="M2 9h20v12H2z" fill="#fde9a3" /><path d="M6 21v-6h12v6h-3v-3H9v3z" fill="#3aa5dc" />
        </TaskIcon>
        <TaskIcon label="download" state="open">
          <path d="M23 1C12-1 1 4 1 13c0 8 9 12 15 9 6-2 7-9 3-12-3-2-7-2-9 1 4-2 7 0 6 3-1 4-8 4-9-1S13 3 19 4c2 0 3-1 4-3z" fill="#18a0ec" />
        </TaskIcon>
        <TaskIcon label="GGJ2013" state="active">
          <rect width="24" height="24" rx="3" fill="#1090f0" />
          <path d="M12 4v13c0 3-4 3-4 0M5 11c1 3 13 3 14 0 0-3-4-3-4 0M9.500 7L12 4.500 14.500 7" fill="none" stroke="#fff" strokeWidth="1.800" />
        </TaskIcon>
        <TaskIcon label="green browser" state="open">
          <circle cx="12" cy="12" r="10.500" fill="#e9f7df" /><circle cx="12" cy="12" r="9.300" fill="#55b827" />
          <path d="M8 12h9c0-6-10-6-10 0s7 6 10 3" fill="none" stroke="#fff" strokeWidth="3" />
          <path d="M2 21C7 22 18 9 23 1" fill="none" stroke="#7bd44a" strokeWidth="1.500" />
        </TaskIcon>
      </div>
      <span className="flex-1" />
      <div className="flex shrink-0 items-center text-xs">
        <span className="mr-5">链接</span>
        <span className="mr-[18px] text-center leading-[17px]">25%<br />CPU使用</span>
        <ChevronUp className="mr-2 h-4 w-4" strokeWidth={1.500} />
        <svg viewBox="0 0 16 14" className="mr-2.5 h-[14px] w-4"><path d="M5.500 4.500h9v7h-9zM15.500 6.500v3M1 2h4v3H1zM3 5v6h2M2 0v2M4 0v2" fill="none" stroke="#fff" /><path d="M7 6h6v4H7z" fill="#fff" /></svg>
        <svg viewBox="0 0 14 14" className="mr-2 h-[14px] w-[14px]"><path d="M1 13C1 6 6 1 13 1M4 13c0-5 4-9 9-9M7 13c0-3 3-6 6-6" fill="none" stroke="#999" strokeWidth="1.300" /><circle cx="11.500" cy="11.500" r="2" fill="#fff" /></svg>
        <svg viewBox="0 0 18 14" className="mr-2 h-[14px] w-[18px]"><path d="M1 5h3l4-4v12L4 9H1z" fill="none" stroke="#fff" /><path d="M10 5q2 2 0 4M12.500 3q4 4 0 8M15 1q5 6 0 12" fill="none" stroke="#aaa" /></svg>
        <svg viewBox="0 0 23 14" className="mr-2.5 h-[14px] w-[23px]"><path d="M.5.500h22v13H.5z" fill="none" stroke="#fff" /><path d="M3 4h17M3 7h17" stroke="#fff" strokeDasharray="2 1" /><path d="M6 10.500h11" stroke="#fff" /></svg>
        <span className="mr-3.5">中</span>
        <span className="mr-3.5"><SogouMark className="h-[17px] w-[17px]" /></span>
        <time className="w-[62px] text-center leading-[19px]">11:10<br />2018/7/10</time>
      </div>
      <button aria-label="notifications" className="relative ml-3 flex w-[30px] items-center justify-center">
        <svg viewBox="0 0 24 24" className="h-6 w-6"><path d="M2 2h16v13H9l-4 4v-4H2z" fill="#fff" /><path d="M4.500 5.500h11M4.500 8.500h11M4.500 11.500h8" stroke="#111" /></svg>
        <span className="absolute right-0 bottom-1 flex h-4 w-4 items-center justify-center rounded-full border border-[#888] bg-[#333] text-xs leading-none">1</span>
      </button>
      <span className="mr-1 ml-[12px] w-px bg-[#555]" />
    </div>
  );
}

function SogouMark({ className }: { className: string }) {
  return (
    <svg viewBox="0 0 28 28" className={className}>
      <path d="M1 4L23 1q2 0 2.500 2L28 23q0 2-2 2.500L7 28q-2 0-2.500-2L0 7z" fill="#f04a1c" />
      <path d="M22 7C15 3 7 6 8 10.500S21 13 21 18 11 23 6 20" fill="none" stroke="#fff" strokeWidth="3.500" />
    </svg>
  );
}

function ImeBar() {
  return (
    <div className="absolute top-2.5 right-[423px] flex items-center text-[#1f73c9]">
      <SogouMark className="z-10 -mr-4 h-7 w-7" />
      <div className="mt-1 flex h-6 items-center gap-[6px] border border-[#a9bfd8] bg-white pr-1 pl-[18px]">
        <button className="w-4 text-sm leading-none font-bold">英</button>
        <svg viewBox="0 0 16 16" className="h-4 w-4"><circle cx="5" cy="5" r="2.200" fill="currentColor" /><path d="M12 8c2 2 0 4-2 5" stroke="currentColor" strokeWidth="2" fill="none" /></svg>
        <FaRegSmile className="h-4 w-4" />
        <FaMicrophone className="h-4 w-4" />
        <FaKeyboard className="h-4 w-4" />
        <FaUserAlt className="h-3.5 w-4 text-[#b5c3d8]" />
        <FaTshirt className="h-4 w-4" />
        <FaWrench className="h-3.5 w-4" />
      </div>
    </div>
  );
}

export default function App() {
  return (
    <div lang="zh-CN" className="relative flex h-screen flex-col overflow-hidden bg-[#f0f0f0] font-['Noto_Sans','Noto_Sans_CJK_SC',sans-serif] text-xs text-black">
      <TitleBar />
      <MenuBar />
      <MainToolbar />
      <main className="flex min-h-0 flex-1">
        <ModuleNav />
        <div className="ml-[5px] flex min-w-0 flex-1 flex-col">
          <ComponentToolbar />
          <div className="flex min-h-0 flex-1 gap-[3px]">
            <ComponentList />
            <PropertyPanel />
          </div>
        </div>
      </main>
      <StatusBar />
      <Taskbar />
      <SectionDialog />
      <ImeBar />
      {/* download ball peeking in from the top edge */}
      <div className="absolute top-0 right-[347px] flex h-5 w-12 items-start justify-center rounded-b-full border-2 border-t-0 border-[#ddd] bg-[#3fc45c] pt-px text-xs leading-none font-bold text-white shadow-md">68</div>
    </div>
  );
}
